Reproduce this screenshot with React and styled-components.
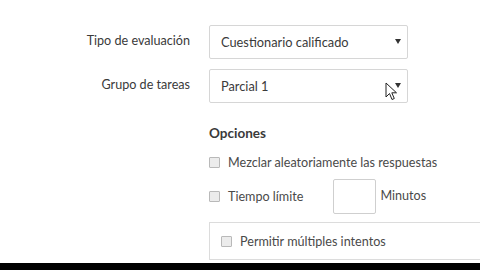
import React from 'react';
import styled, { createGlobalStyle } from 'styled-components';

const GlobalStyle = createGlobalStyle`
  html, body {
    margin: 0;
    padding: 0;
    background: #ffffff;
    font-family: Lato, "Open Sans", sans-serif;
    color: #444;
  }
  #root {
    height: 270px;
    overflow: hidden;
  }
`;

const Page = styled.div`
  height: 263px;
  display: flex;
  flex-direction: column;
  padding-top: 25px;
  box-sizing: border-box;
  background: #fff;
  overflow: hidden;
`;

const BottomBar = styled.div`
  height: 7px;
  background: #000;
`;

const FieldRow = styled.div`
  display: grid;
  grid-template-columns: 190px 199px;
  column-gap: 19px;
  align-items: center;
  margin-bottom: ${props => props.gap || 0}px;
`;

const FieldLabel = styled.label`
  text-align: right;
  font-size: 12.6px;
  color: #3a3a3a;
  margin-top: ${props => props.shift || 0}px;
`;

const SelectBox = styled.div`
  position: relative;
  height: 34px;
  box-sizing: border-box;
  border: 1px solid #d6d6d6;
  border-radius: 2px;
  display: flex;
  align-items: center;
  padding: 0 11px;
  font-size: 12.8px;
  color: #3a3a3a;
  background: #fff;
`;

const Caret = styled.span`
  position: absolute;
  right: 6px;
  top: 50%;
  margin-top: -3px;
  width: 0;
  height: 0;
  border-left: 3px solid transparent;
  border-right: 3px solid transparent;
  border-top: 5px solid #333;
`;

const Cursor = styled.svg`
  position: absolute;
  left: 175px;
  top: 12px;
`;

const Options = styled.div`
  margin-left: 209px;
  display: flex;
  flex-direction: column;
`;

const Heading = styled.h3`
  margin: 22px 0 11px 0;
  font-size: 13.5px;
  font-weight: 700;
  color: #3a3a3a;
`;

const CheckRow = styled.div`
  display: flex;
  align-items: center;
  font-size: 12.6px;
  color: #4a4a4a;
  height: ${props => props.h || 20}px;
  margin-top: ${props => props.top || 0}px;
`;

const Check = styled.span`
  width: 9px;
  height: 9px;
  border: 1px solid #b9b9b9;
  background: #ececec;
  border-radius: 1px;
  margin-right: 8px;
  flex-shrink: 0;
`;

const MinutesInput = styled.div`
  width: 43px;
  height: 35px;
  box-sizing: border-box;
  border: 1px solid #cfcfcf;
  border-radius: 2px;
  margin-left: 30px;
  margin-right: 4px;
`;

const Unit = styled.span`
  align-self: flex-start;
  margin-top: 9px;
`;

const AttemptsBox = styled.div`
  margin-top: 8px;
  height: 38px;
  width: 300px;
  box-sizing: border-box;
  border: 1px solid #dcdcdc;
  border-right: none;
  display: flex;
  align-items: center;
  padding-left: 11px;
  font-size: 12.6px;
  color: #4a4a4a;
`;

export default function App() {
  return (
    <>
      <GlobalStyle />
      <Page>
        <FieldRow gap={10}>
          <FieldLabel shift={-4}>Tipo de evaluación</FieldLabel>
          <SelectBox>
            Cuestionario calificado
            <Caret />
          </SelectBox>
        </FieldRow>
        <FieldRow>
          <FieldLabel shift={-4}>Grupo de tareas</FieldLabel>
          <SelectBox>
            Parcial 1
            <Caret />
            <Cursor width="13" height="20" viewBox="0 0 13 20">
              <path d="M1 1 L1 15 L4.5 11.5 L7 17.5 L9.3 16.5 L6.8 10.8 L11.5 10.8 Z" fill="#fff" stroke="#222" strokeWidth="1" strokeLinejoin="round" />
            </Cursor>
          </SelectBox>
        </FieldRow>
        <Options>
          <Heading>Opciones</Heading>
          <CheckRow h={20}>
            <Check />
            Mezclar aleatoriamente las respuestas
          </CheckRow>
          <CheckRow h={35} top={7}>
            <Check />
            Tiempo límite
            <MinutesInput />
            <Unit>Minutos</Unit>
          </CheckRow>
          <AttemptsBox>
            <Check />
            Permitir múltiples intentos
          </AttemptsBox>
        </Options>
      </Page>
      <BottomBar />
    </>
  );
}
